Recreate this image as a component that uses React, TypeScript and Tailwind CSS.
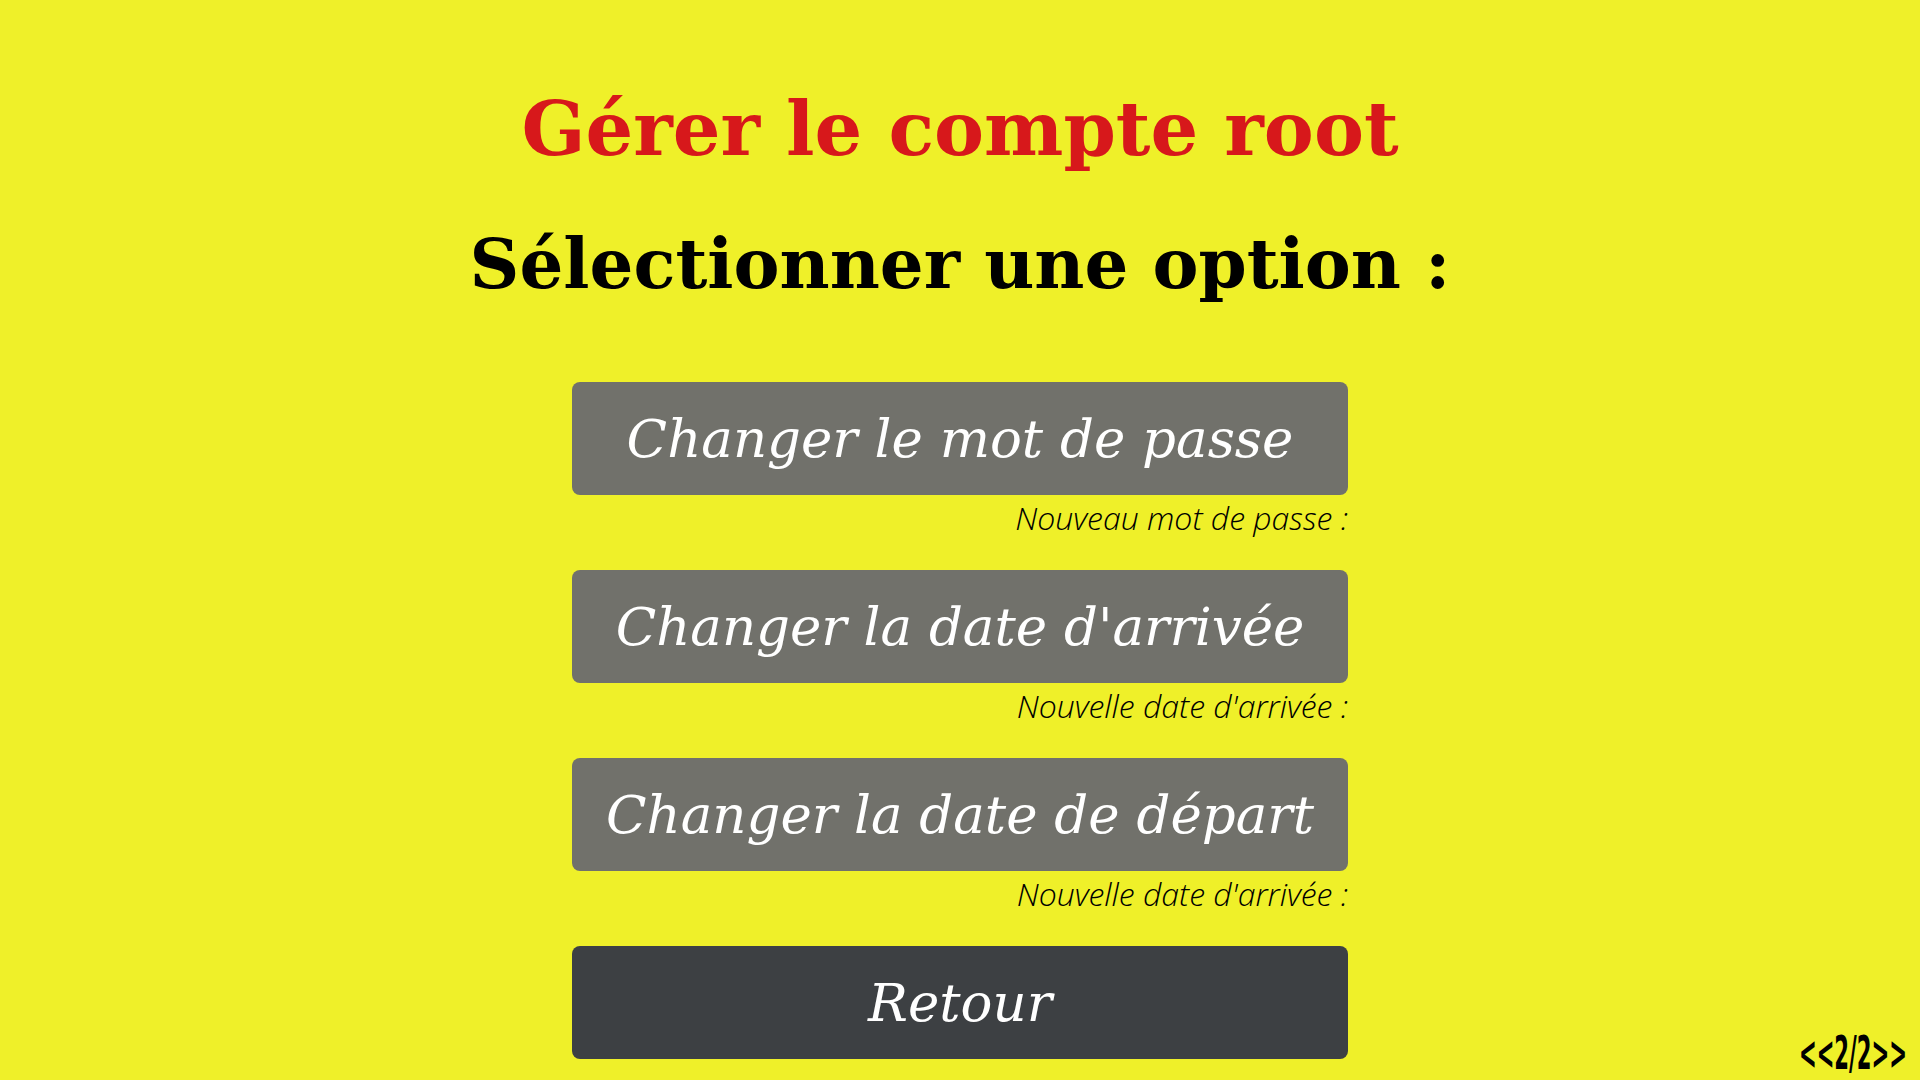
export default function App() {
  const items = [
    { label: "Changer le mot de passe", note: "Nouveau mot de passe :" },
    { label: "Changer la date d'arrivée", note: "Nouvelle date d'arrivée :" },
    { label: "Changer la date de départ", note: "Nouvelle date d'arrivée :" },
  ];
  return (
    <div className="relative w-[1920px] h-[1080px] bg-[#eff029] overflow-hidden flex flex-col items-center">
      <h1 className="mt-[86px] font-['DejaVu_Serif',serif] text-[75px] leading-[86px] font-bold text-[#d7181b]">
        Gérer le compte root
      </h1>
      <h2 className="mt-[52px] font-['DejaVu_Serif',serif] text-[69px] leading-[80px] font-bold text-black">
        Sélectionner une option :
      </h2>
      <div className="mt-[78px] w-[776px] flex flex-col">
        {items.map((it) => (
          <div key={it.label} className="flex flex-col">
            <button className="h-[113px] w-full rounded-[8px] bg-[#71716b] font-['DejaVu_Serif',serif] text-white italic text-[53px] flex items-center justify-center">
              {it.label}
            </button>
            <div className="mt-[4px] h-[71px] text-right font-['Open_Sans',sans-serif] italic font-light text-[32px] leading-[38px] text-black">
              {it.note}
            </div>
          </div>
        ))}
        <button className="h-[113px] w-full rounded-[8px] bg-[#3d4043] font-['DejaVu_Serif',serif] text-white italic text-[53px] flex items-center justify-center">
          Retour
        </button>
      </div>
      <div className="absolute right-[13px] bottom-[4px] origin-right scale-x-[0.46] font-['DejaVu_Sans',sans-serif] text-[46px] leading-[46px] font-bold text-black">
        &lt;&lt;2/2&gt;&gt;
      </div>
    </div>
  );
}
